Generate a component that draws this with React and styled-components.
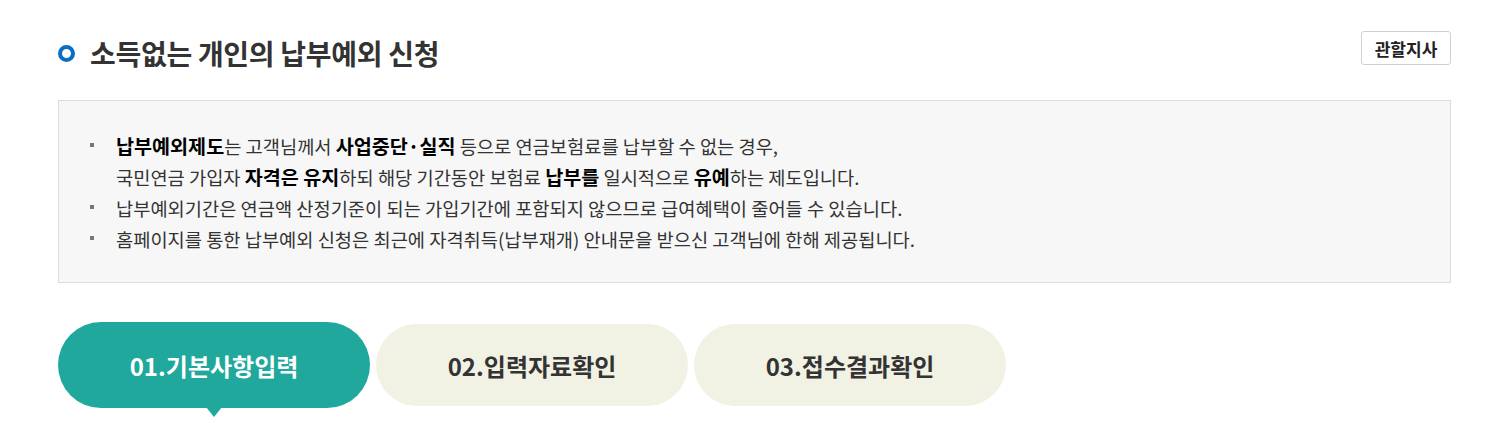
import React from "react";
import styled, { createGlobalStyle } from "styled-components";

const GlobalStyle = createGlobalStyle`
  body {
    margin: 0;
    background: #fff;
    font-family: "Noto Sans CJK KR", "Noto Sans", sans-serif;
    color: #333;
  }
`;

const Page = styled.div`
  width: 1393px;
  padding: 31px 0 0 58px;
`;

const Header = styled.div`
  display: flex;
  justify-content: space-between;
  align-items: flex-start;
`;

const Title = styled.h2`
  display: flex;
  align-items: center;
  gap: 15px;
  margin: 0;
  padding-top: 2px;
  font-size: 28px;
  line-height: 40px;
  font-weight: 700;
  color: #333;
  letter-spacing: -0.3px;
`;

const Ring = styled.span`
  width: 17px;
  height: 17px;
  box-sizing: border-box;
  border: 4px solid #0a6fc3;
  border-radius: 50%;
`;

const OfficeButton = styled.button`
  width: 90px;
  height: 34px;
  border: 1px solid #cfcfcf;
  border-radius: 3px;
  background: #fff;
  font-family: inherit;
  font-size: 17px;
  font-weight: 700;
  color: #222;
  padding: 0;
  cursor: pointer;
`;

const InfoBox = styled.div`
  margin-top: 27px;
  border: 1px solid #dcdcdc;
  background: #f7f7f7;
  padding: 29px 30px 28px 31px;
`;

const List = styled.ul`
  list-style: none;
  margin: 0;
  padding: 0;
`;

const Item = styled.li`
  position: relative;
  padding-left: 26px;
  font-size: 18.7px;
  line-height: 31px;
  color: #333;

  &::before {
    content: "";
    position: absolute;
    left: 0;
    top: 13px;
    width: 4px;
    height: 4px;
    background: #777;
  }

  b {
    color: #000;
    font-weight: 700;
    font-size: 19.6px;
  }
`;

const Steps = styled.div`
  display: flex;
  align-items: center;
  gap: 6px;
  margin-top: 39px;
  padding-bottom: 12px;
`;

const Step = styled.div`
  position: relative;
  width: 312px;
  height: ${(p) => (p.$active ? "86px" : "82px")};
  border-radius: 43px;
  display: flex;
  align-items: center;
  justify-content: center;
  background: ${(p) => (p.$active ? "#20a89d" : "#f1f1e4")};
  color: ${(p) => (p.$active ? "#fff" : "#333")};
  font-size: 24px;
  font-weight: 700;
`;

const Pointer = styled.span`
  position: absolute;
  left: 148px;
  top: 85px;
  width: 16px;
  height: 10px;
  background: #20a89d;
  clip-path: polygon(0 0, 100% 0, 50% 100%);
`;

const steps = ["01.기본사항입력", "02.입력자료확인", "03.접수결과확인"];

export default function App() {
  return (
    <>
      <GlobalStyle />
      <Page>
        <Header>
          <Title>
            <Ring />
            소득없는 개인의 납부예외 신청
          </Title>
          <OfficeButton>관할지사</OfficeButton>
        </Header>
        <InfoBox>
          <List>
            <Item>
              <b>납부예외제도</b>는 고객님께서 <b>사업중단·실직</b> 등으로 연금보험료를 납부할 수 없는 경우,
              <br />
              국민연금 가입자 <b>자격은 유지</b>하되 해당 기간동안 보험료 <b>납부를</b> 일시적으로 <b>유예</b>하는 제도입니다.
            </Item>
            <Item>납부예외기간은 연금액 산정기준이 되는 가입기간에 포함되지 않으므로 급여혜택이 줄어들 수 있습니다.</Item>
            <Item>홈페이지를 통한 납부예외 신청은 최근에 자격취득(납부재개) 안내문을 받으신 고객님에 한해 제공됩니다.</Item>
          </List>
        </InfoBox>
        <Steps>
          {steps.map((s, i) => (
            <Step key={s} $active={i === 0}>
              {s}
              {i === 0 && <Pointer />}
            </Step>
          ))}
        </Steps>
      </Page>
    </>
  );
}
